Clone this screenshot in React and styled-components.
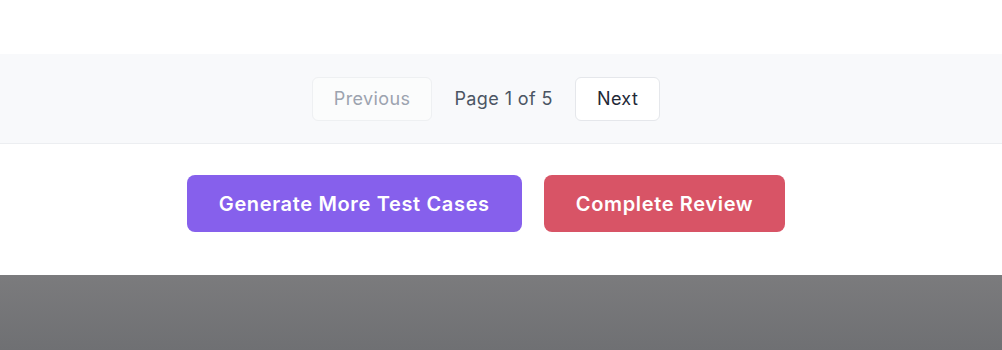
import styled, { createGlobalStyle } from 'styled-components'

const GlobalStyle = createGlobalStyle`
  * { box-sizing: border-box; }
  body {
    margin: 0;
    background: #ffffff;
    font-family: Inter, "Noto Sans", "Liberation Sans", sans-serif;
  }
`

export default function App() {
  return (
    <Page>
      <GlobalStyle />
      <TopSpace />
      <PaginationBar>
        <PageButton disabled>Previous</PageButton>
        <PageInfo>Page 1 of 5</PageInfo>
        <PageButton>Next</PageButton>
      </PaginationBar>
      <Actions>
        <ActionButton $bg="#8660ec">Generate More Test Cases</ActionButton>
        <ActionButton $bg="#d85466">Complete Review</ActionButton>
      </Actions>
      <Backdrop />
    </Page>
  )
}

const Page = styled.div`
  width: 100%;
  min-height: 100vh;
  display: flex;
  flex-direction: column;
`

const TopSpace = styled.div`
  height: 54px;
  background: #ffffff;
`

const PaginationBar = styled.div`
  display: flex;
  justify-content: center;
  align-items: center;
  gap: 22px;
  padding: 23px 30px 22px 0;
  background: #f8f9fb;
  border-bottom: 1px solid #eceef1;
  box-shadow: 0 1px 2px rgba(0, 0, 0, 0.03);
`

const PageButton = styled.button`
  height: 44px;
  padding: 0 21px;
  font-family: inherit;
  font-size: 18px;
  font-weight: 400;
  line-height: 28px;
  letter-spacing: 0.4px;
  color: ${({ disabled }) => (disabled ? '#9ca3af' : '#1f2937')};
  background: ${({ disabled }) => (disabled ? '#fbfcfc' : '#ffffff')};
  border: 1px solid ${({ disabled }) => (disabled ? '#eef0f2' : '#e5e7eb')};
  border-radius: 6px;
  cursor: ${({ disabled }) => (disabled ? 'default' : 'pointer')};
`

const PageInfo = styled.span`
  font-size: 18px;
  line-height: 28px;
  letter-spacing: 0.4px;
  color: #4b5563;
`

const Actions = styled.div`
  display: flex;
  justify-content: center;
  gap: 22px;
  padding: 31px 30px 43px 0;
  background: #ffffff;
`

const ActionButton = styled.button`
  height: 57px;
  padding: 0 32px;
  font-family: inherit;
  font-size: 20px;
  font-weight: 600;
  letter-spacing: 0.65px;
  color: #ffffff;
  background: ${({ $bg }) => $bg};
  border: none;
  border-radius: 8px;
  cursor: pointer;
`

const Backdrop = styled.div`
  flex: 1;
  min-height: 75px;
  background: linear-gradient(180deg, #7b7b7d 0%, #6f7073 100%);
`
